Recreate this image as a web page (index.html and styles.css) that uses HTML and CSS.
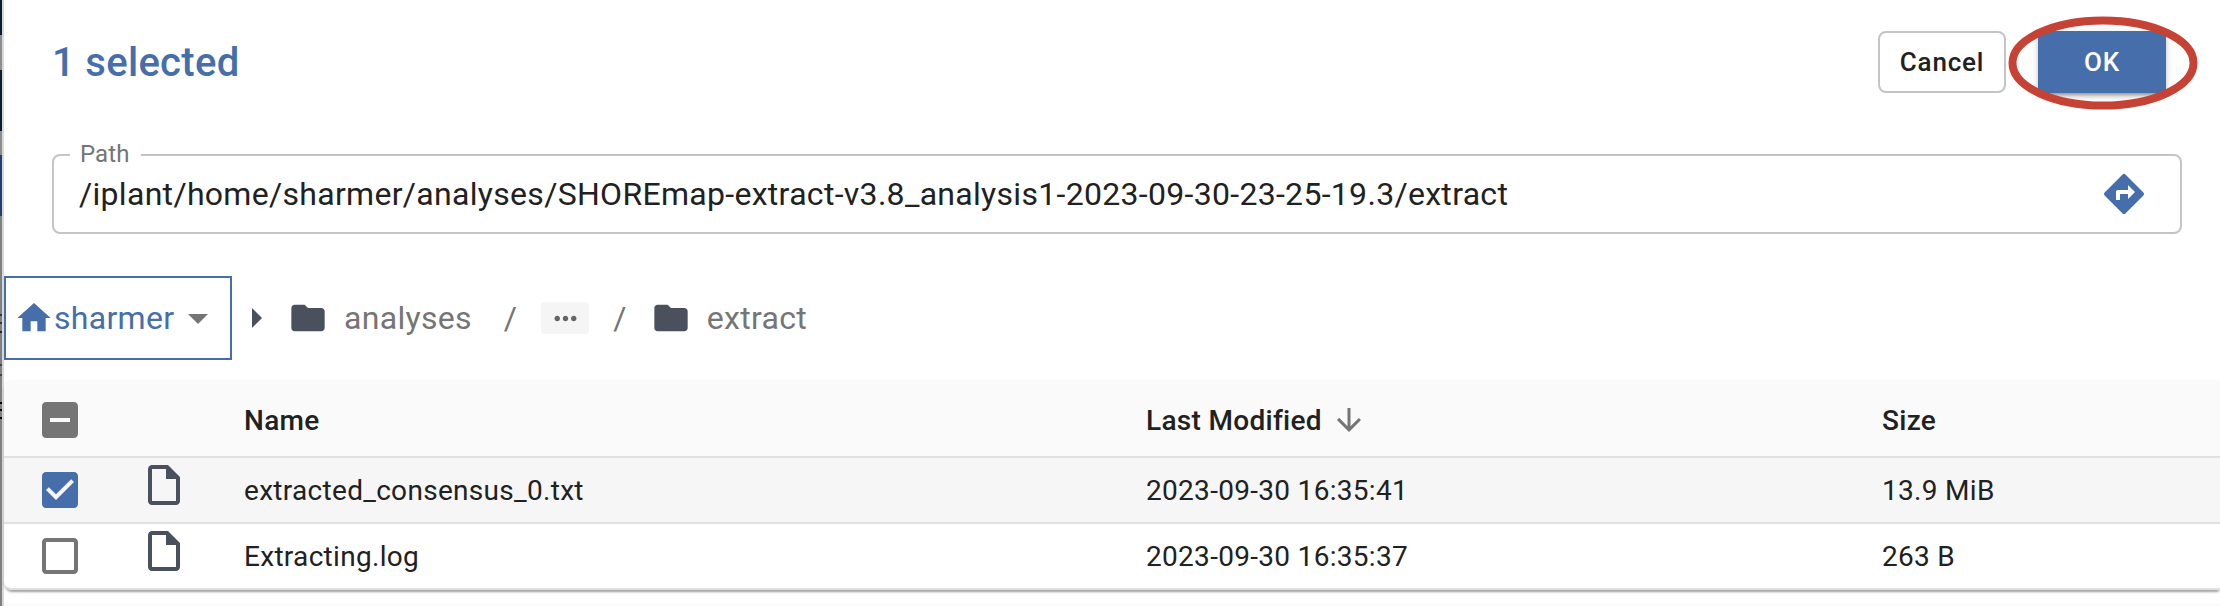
FILE: index.html
```html
<!DOCTYPE html>
<html lang="en">
<head>
<meta charset="utf-8">
<title>Select file</title>
<link rel="stylesheet" href="styles.css">
</head>
<body>
<div class="backdrop"></div>
<main class="dialog">
  <header class="toolbar">
    <h1 class="title">1 selected</h1>
    <div class="actions">
      <button class="btn btn-outlined">Cancel</button>
      <div class="ok-wrap">
        <button class="btn btn-primary">OK</button>
        <svg class="highlight" viewBox="0 0 190 94"><ellipse cx="95" cy="47" rx="90.5" ry="42.5"/></svg>
      </div>
    </div>
  </header>

  <fieldset class="path-field">
    <legend>Path</legend>
    <div class="path-row">
      <span class="path-value">/iplant/home/sharmer/analyses/SHOREmap-extract-v3.8_analysis1-2023-09-30-23-25-19.3/extract</span>
      <svg class="icon48 blue" viewBox="0 0 24 24"><path d="M21.71 11.29l-9-9a.996.996 0 0 0-1.41 0l-9 9a.996.996 0 0 0 0 1.41l9 9c.39.39 1.02.39 1.41 0l9-9a.996.996 0 0 0 0-1.41zM14 14.5V12h-4v3H8v-4c0-.55.45-1 1-1h5V7.500l3.500 3.500-3.500 3.500z"/></svg>
    </div>
  </fieldset>

  <nav class="crumbs">
    <div class="root">
      <svg class="icon40 blue" viewBox="0 0 24 24"><path d="M10 20v-6h4v6h5v-8h3L12 3 2 12h3v8z"/></svg>
      <span class="root-name">sharmer</span>
      <svg class="icon48 gray" viewBox="0 0 24 24"><path d="M7 10l5 5 5-5z"/></svg>
    </div>
    <svg class="icon48 slate" viewBox="0 0 24 24"><path d="M10 17l5-5-5-5v10z"/></svg>
    <div class="crumb">
      <svg class="icon40 slate" viewBox="0 0 24 24"><path d="M10 4H4c-1.100 0-1.990.9-1.990 2L2 18c0 1.100.9 2 2 2h16c1.100 0 2-.9 2-2V8c0-1.100-.9-2-2-2h-8l-2-2z"/></svg>
      <span>analyses</span>
    </div>
    <span class="sep sep-first">/</span>
    <span class="more"><svg viewBox="0 0 24 24"><path d="M6 10c-1.100 0-2 .9-2 2s.9 2 2 2 2-.9 2-2-.9-2-2-2zm12 0c-1.100 0-2 .9-2 2s.9 2 2 2 2-.9 2-2-.9-2-2-2zm-6 0c-1.100 0-2 .9-2 2s.9 2 2 2 2-.9 2-2-.9-2-2-2z"/></svg></span>
    <span class="sep sep-last">/</span>
    <div class="crumb">
      <svg class="icon40 slate" viewBox="0 0 24 24"><path d="M10 4H4c-1.100 0-1.990.9-1.990 2L2 18c0 1.100.9 2 2 2h16c1.100 0 2-.9 2-2V8c0-1.100-.9-2-2-2h-8l-2-2z"/></svg>
      <span>extract</span>
    </div>
  </nav>

  <section class="table">
    <div class="row head">
      <svg class="icon48 gray" viewBox="0 0 24 24"><path d="M19 3H5c-1.100 0-2 .9-2 2v14c0 1.100.9 2 2 2h14c1.100 0 2-.9 2-2V5c0-1.100-.9-2-2-2zm-2 10H7v-2h10v2z"/></svg>
      <span></span>
      <span>Name</span>
      <span class="sorted">Last Modified
        <svg class="icon36 gray" viewBox="0 0 24 24"><path d="M20 12l-1.410-1.410L13 16.170V4h-2v12.170l-5.580-5.590L4 12l8 8 8-8z"/></svg>
      </span>
      <span>Size</span>
    </div>
    <div class="row selected">
      <svg class="icon48 blue" viewBox="0 0 24 24"><path d="M19 3H5c-1.110 0-2 .9-2 2v14c0 1.100.89 2 2 2h14c1.110 0 2-.9 2-2V5c0-1.100-.89-2-2-2zm-9 14l-5-5 1.410-1.410L10 14.170l7.590-7.590L19 8l-9 9z"/></svg>
      <svg class="icon48 slate file" viewBox="0 0 24 24"><path d="M14 2H6c-1.100 0-1.990.9-1.990 2L4 20c0 1.100.89 2 1.990 2H18c1.100 0 2-.9 2-2V8l-6-6zM6 20V4h7v5h5v11H6z"/></svg>
      <span>extracted_consensus_0.txt</span>
      <span>2023-09-30 16:35:41</span>
      <span>13.9 MiB</span>
    </div>
    <div class="row">
      <svg class="icon48 gray" viewBox="0 0 24 24"><path d="M19 5v14H5V5h14m0-2H5c-1.100 0-2 .9-2 2v14c0 1.100.9 2 2 2h14c1.100 0 2-.9 2-2V5c0-1.100-.9-2-2-2z"/></svg>
      <svg class="icon48 slate file" viewBox="0 0 24 24"><path d="M14 2H6c-1.100 0-1.990.9-1.990 2L4 20c0 1.100.89 2 1.990 2H18c1.100 0 2-.9 2-2V8l-6-6zM6 20V4h7v5h5v11H6z"/></svg>
      <span>Extracting.log</span>
      <span>2023-09-30 16:35:37</span>
      <span>263 B</span>
    </div>
  </section>
  <div class="pager"></div>
</main>
</body>
</html>
```

FILE: styles.css
```css
* { box-sizing: border-box; }

body {
  margin: 0;
  height: 606px;
  display: flex;
  overflow: hidden;
  background: #fff;
  color: #212121;
  font-family: Roboto, "Liberation Sans", sans-serif;
}

.backdrop {
  width: 4px;
  flex: none;
  border-right: 2px solid #d8d8d8;
  background: linear-gradient(#0b1c33 0 35px, #8c8c8c 35px 70px, #0b1c33 70px 131px, #8c8c8c 131px 155px, #213f70 155px 216px, #808080 216px 314px, #333 314px 316px, #808080 316px 322px, #333 322px 324px, #808080 324px 331px, #222 331px 333px, #808080 333px 364px, #444 364px 366px, #808080 366px 374px, #444 374px 376px, #808080 376px 402px, #000 402px 404px, #808080 404px 409px, #000 409px 411px, #808080 411px 417px, #000 417px 419px, #808080 419px);
}

.dialog { flex: 1; min-width: 0; display: flex; flex-direction: column; }

.toolbar {
  height: 124px;
  flex: none;
  display: flex;
  align-items: center;
  justify-content: space-between;
  padding: 0 54px 0 48px;
}
.title {
  margin: 0;
  font-size: 40px;
  font-weight: 500;
  letter-spacing: 0.3px;
  color: #456eaa;
}
.actions { display: flex; gap: 32px; }
.btn {
  display: block;
  width: 128px;
  height: 62px;
  padding: 0;
  border: 0;
  border-radius: 8px;
  font: 500 26px/1 Roboto, sans-serif;
  letter-spacing: 0.8px;
}
.btn-outlined { background: #fff; color: #212121; border: 2px solid #c4c4c4; }
.btn-primary {
  background: #456eaa;
  color: #fff;
  border-radius: 4px;
  box-shadow: 0 6px 2px -4px rgba(0,0,0,.2), 0 4px 4px rgba(0,0,0,.14), 0 2px 10px rgba(0,0,0,.12);
}
.ok-wrap { position: relative; }
.highlight {
  position: absolute;
  left: -30px;
  top: -15px;
  width: 190px;
  height: 94px;
  fill: none;
  stroke: #c64234;
  stroke-width: 8;
}

.path-field {
  margin: 18px 38px 0 48px;
  height: 92px;
  flex: none;
  padding: 0 32px 0 16px;
  border: 2px solid #c4c4c4;
  border-radius: 8px;
}
.path-field legend {
  height: 26px;
  padding: 0 11px 0 10px;
  font-size: 24px;
  line-height: 24px;
  letter-spacing: 0.1px;
  color: #757575;
}
.path-row { display: flex; align-items: center; justify-content: space-between; height: 52px; padding-left: 9px; }
.path-value { font-size: 32px; letter-spacing: 0.3px; }

.icon48 { width: 48px; height: 48px; flex: none; display: block; }
.icon40 { width: 40px; height: 40px; flex: none; display: block; }
.icon36 { width: 36px; height: 36px; flex: none; display: block; }
.blue { fill: #456eaa; }
.gray { fill: #757575; }
.slate { fill: #4a505e; }

.crumbs {
  margin-top: 42px;
  height: 84px;
  flex: none;
  display: flex;
  align-items: center;
  font-size: 32px;
  letter-spacing: 0.3px;
  color: #757575;
}
.root {
  width: 228px;
  height: 84px;
  display: flex;
  align-items: center;
  padding: 0 8px;
  border: 2px solid #456eaa;
  color: #456eaa;
}
.root-name { width: 120px; }
.crumb { display: flex; align-items: center; gap: 16px; }
.root + .icon48 + .crumb { margin-left: 8px; }
.sep-first { margin: 0 24px 0 32px; }
.sep-last { margin: 0 24px; }
.more {
  width: 48px;
  height: 32px;
  display: flex;
  align-items: center;
  justify-content: center;
  border-radius: 4px;
  background: #f5f5f5;
}
.more svg { width: 33px; height: 33px; fill: #656565; }

.table {
  margin-top: 20px;
  flex: none;
  border-radius: 8px 0 0 8px;
  font-size: 28px;
  letter-spacing: 0.3px;
  box-shadow: 0 4px 2px -2px rgba(0,0,0,.2), 0 2px 2px rgba(0,0,0,.14), 0 2px 6px -2px rgba(0,0,0,.12);
}
.row {
  display: grid;
  grid-template-columns: 104px 104px 902px 736px 1fr;
  align-items: center;
  height: 66px;
  padding-left: 32px;
  border-bottom: 2px solid #e0e0e0;
}
.row:last-child { border-radius: 0 0 0 8px; }
.head { height: 78px; padding-top: 4px; background: #fafafa; border-radius: 8px 0 0; font-weight: 500; }
.selected { background: #f6f6f6; }
.file { margin-top: -10px; }
.sorted { display: flex; align-items: center; gap: 9px; }

.pager { margin-top: 14px; flex: 1; background: #fafafa; }
```
